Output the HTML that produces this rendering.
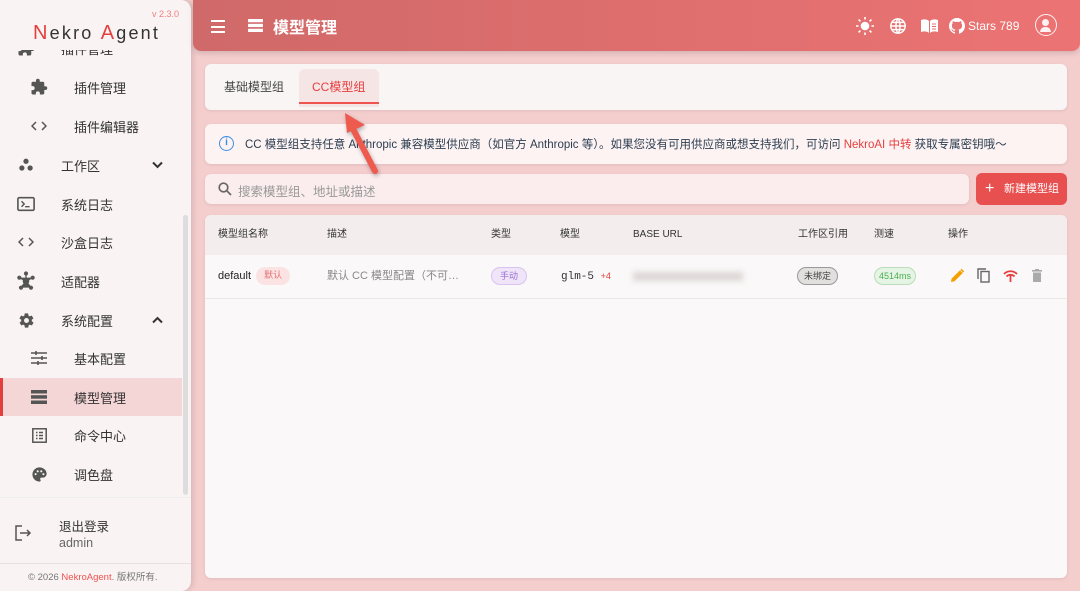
<!DOCTYPE html>
<html><head><meta charset="utf-8"><style>
*{box-sizing:border-box;margin:0;padding:0}
body{width:1080px;height:591px;overflow:hidden;background:#f4cdcd;font-family:"Liberation Sans","Noto Sans CJK SC",sans-serif;position:relative;color:#333}
.side{position:absolute;left:0;top:0;width:191px;height:591px;background:#f9f3f3;border-radius:0 10px 10px 0;box-shadow:2px 0 6px rgba(0,0,0,.12);overflow:hidden}
.logohd{position:absolute;left:0;top:0;width:182px;height:50px;background:#f9f3f3}
.logo{position:absolute;left:33px;top:22px;font-size:18px;letter-spacing:2.2px;color:#333}
.logo b{color:#e53e3e;font-weight:normal;font-size:20px}
.ver{position:absolute;left:152px;top:9px;font-size:9px;color:#f07f7f}
.it{position:absolute;left:0;width:182px;height:38px;font-size:13px;color:#333;display:flex;align-items:center}
.it .ic{position:absolute;left:16px;width:20px;height:20px;display:flex;align-items:center;justify-content:center;color:#555}
.it.sub .ic{left:29px}
.it .tx{position:absolute;left:61px}
.it.sub .tx{left:74px}
.it .ch{position:absolute;left:152px;top:15px}
.act{background:#f5d6d7;border-left:3px solid #e53e3e}
.sb{position:absolute;left:183px;top:215px;width:5px;height:280px;background:#ddd;border-radius:3px}
.hdr{position:absolute;left:193px;top:0;width:887px;height:51px;background:linear-gradient(90deg,#d06969,#ec7373);border-radius:0 0 8px 8px;box-shadow:0 2px 6px rgba(0,0,0,.15);color:#fff}
.card{position:absolute;left:205px;width:862px;background:#f9f5f5;border-radius:6px;box-shadow:0 1px 3px rgba(0,0,0,.08)}
.tb{position:absolute;top:0;height:44px;display:flex;align-items:center;font-size:12px}
.th{position:absolute;top:0;height:40px;line-height:40px;font-size:10px;color:#333}
.td{position:absolute;top:40px;height:43px;line-height:43px;font-size:11px}
.chip{display:inline-block;border-radius:9px;font-size:9px;padding:0 8px;height:18px;line-height:16px;vertical-align:middle}
</style></head><body>
<div class="side">
<div class="it" style="top:29px"><span class="ic"><svg width="18" height="18" viewBox="0 0 24 24"><path fill="#555" d="M20.5 11H19V7a2 2 0 0 0-2-2h-4V3.5a2.5 2.5 0 0 0-5 0V5H4a2 2 0 0 0-2 2v3.8h1.5a2.7 2.7 0 0 1 0 5.4H2V20a2 2 0 0 0 2 2h3.8v-1.5a2.7 2.7 0 0 1 5.4 0V22H17a2 2 0 0 0 2-2v-4h1.5a2.5 2.5 0 0 0 0-5z"/></svg></span><span class="tx">插件管理</span></div>
<div class="logohd"></div>
<div class="logo"><b>N</b>ekro <b>A</b>gent</div>
<div class="ver">v 2.3.0</div>
<div class="it sub" style="top:68px"><span class="ic"><svg width="18" height="18" viewBox="0 0 24 24"><path fill="#555" d="M20.5 11H19V7a2 2 0 0 0-2-2h-4V3.5a2.5 2.5 0 0 0-5 0V5H4a2 2 0 0 0-2 2v3.8h1.5a2.7 2.7 0 0 1 0 5.4H2V20a2 2 0 0 0 2 2h3.8v-1.5a2.7 2.7 0 0 1 5.4 0V22H17a2 2 0 0 0 2-2v-4h1.5a2.5 2.5 0 0 0 0-5z"/></svg></span><span class="tx">插件管理</span></div>
<div class="it sub" style="top:107px"><span class="ic"><svg width="16" height="10" viewBox="0 0 16 10" fill="none" stroke="#555" stroke-width="1.5"><path d="M5 1L1 5l4 4M11 1l4 4-4 4"/></svg></span><span class="tx">插件编辑器</span></div>
<div class="it" style="top:146px"><span class="ic"><svg width="18" height="18" viewBox="0 0 24 24" fill="#555"><circle cx="12" cy="7" r="3.5"/><circle cx="6.5" cy="16" r="3.5"/><circle cx="17.5" cy="16" r="3.5"/></svg></span><span class="tx">工作区</span><svg class="ch" width="11" height="8" viewBox="0 0 11 8" fill="none" stroke="#333" stroke-width="2"><path d="M1 1.5l4.5 4.5 4.5-4.5"/></svg></div>
<div class="it" style="top:185px"><span class="ic"><svg width="18" height="16" viewBox="0 0 20 16"><rect x="1" y="1" width="18" height="14" rx="1.5" fill="none" stroke="#555" stroke-width="1.8"/><path d="M5 5l3 3-3 3M9 11h5" stroke="#555" stroke-width="1.6" fill="none"/></svg></span><span class="tx">系统日志</span></div>
<div class="it" style="top:223px"><span class="ic"><svg width="16" height="10" viewBox="0 0 16 10" fill="none" stroke="#555" stroke-width="1.5"><path d="M5 1L1 5l4 4M11 1l4 4-4 4"/></svg></span><span class="tx">沙盒日志</span></div>
<div class="it" style="top:262px"><span class="ic"><svg width="20" height="20" viewBox="0 0 24 24" fill="#555"><circle cx="12" cy="12" r="4"/><circle cx="12" cy="3" r="2.5"/><circle cx="4" cy="8" r="2.5"/><circle cx="20" cy="8" r="2.5"/><circle cx="6" cy="20" r="2.5"/><circle cx="18" cy="20" r="2.5"/><path d="M12 3v9M4 8l8 4 8-4M6 20l6-8 6 8" stroke="#555" stroke-width="1.5"/></svg></span><span class="tx">适配器</span></div>
<div class="it" style="top:301px"><span class="ic"><svg width="17" height="17" viewBox="0 0 24 24"><path fill="#555" d="M19.4 13c0-.3.1-.7.1-1s0-.7-.1-1l2.1-1.6c.2-.2.2-.4.1-.6l-2-3.5c-.1-.2-.4-.3-.6-.2l-2.5 1c-.5-.4-1.100-.7-1.700-1l-.4-2.600c0-.3-.2-.5-.5-.5h-4c-.2 0-.5.2-.5.4l-.4 2.700c-.6.2-1.100.6-1.700 1l-2.500-1c-.2-.1-.5 0-.6.2l-2 3.500c-.1.2-.1.5.1.6L4.6 11c0 .3-.1.7-.1 1s0 .7.1 1l-2.100 1.600c-.2.2-.2.4-.1.6l2 3.500c.1.2.4.3.6.2l2.500-1c.5.4 1.100.7 1.700 1l.4 2.600c0 .3.2.5.5.5h4c.2 0 .5-.2.5-.4l.4-2.700c.6-.3 1.200-.6 1.700-1l2.500 1c.2.1.5 0 .6-.2l2-3.500c.1-.2.1-.5-.1-.6zM12 15.5a3.5 3.5 0 1 1 0-7 3.5 3.5 0 0 1 0 7z"/></svg></span><span class="tx">系统配置</span><svg class="ch" width="11" height="8" viewBox="0 0 11 8" fill="none" stroke="#333" stroke-width="2"><path d="M1 6.5l4.5-4.5 4.5 4.5"/></svg></div>
<div class="it sub" style="top:339px"><span class="ic"><svg width="16" height="14" viewBox="0 0 16 14" stroke="#555" stroke-width="1.6"><path d="M0 2h16M0 7h16M0 12h16"/><path d="M5 0v4M11 5v4M7 10v4"/></svg></span><span class="tx">基本配置</span></div>
<div class="it sub act" style="top:378px"><span class="ic" style="left:26px"><svg width="16" height="14" viewBox="0 0 16 14" fill="#555"><rect y="0" width="16" height="3.5"/><rect y="5.2" width="16" height="3.5"/><rect y="10.5" width="16" height="3.5"/></svg></span><span class="tx" style="left:71px">模型管理</span></div>
<div class="it sub" style="top:416px"><span class="ic"><svg width="15" height="15" viewBox="0 0 15 15"><rect x=".8" y=".8" width="13.4" height="13.4" fill="none" stroke="#555" stroke-width="1.5"/><path d="M4 4.5h1.5M7 4.5h4M4 7.5h1.5M7 7.5h4M4 10.5h1.5M7 10.5h4" stroke="#555" stroke-width="1.4"/></svg></span><span class="tx">命令中心</span></div>
<div class="it sub" style="top:455px"><span class="ic"><svg width="17" height="17" viewBox="0 0 24 24"><path fill="#555" d="M12 2C6.5 2 2 6.5 2 12s4.5 10 10 10c.9 0 1.7-.7 1.7-1.7 0-.4-.2-.8-.4-1.1-.3-.3-.4-.7-.4-1.1 0-.9.7-1.7 1.7-1.7h2c3 0 5.5-2.5 5.5-5.5C22 6 17.5 2 12 2zM6.5 13a1.5 1.5 0 1 1 0-3 1.5 1.5 0 0 1 0 3zm3-4a1.5 1.5 0 1 1 0-3 1.5 1.5 0 0 1 0 3zm5 0a1.5 1.5 0 1 1 0-3 1.5 1.5 0 0 1 0 3zm3 4a1.5 1.5 0 1 1 0-3 1.5 1.5 0 0 1 0 3z"/></svg></span><span class="tx">调色盘</span></div>
<div style="position:absolute;left:0;top:497px;width:191px;height:1px;background:#eee"></div>
<svg style="position:absolute;left:15px;top:525px" width="17" height="16" viewBox="0 0 17 16" fill="none" stroke="#555" stroke-width="1.5"><path d="M7 1H1v14h6M5 8h10M12 5l3 3-3 3"/></svg>
<div style="position:absolute;left:59px;top:516px;font-size:12.5px">退出登录</div>
<div style="position:absolute;left:59px;top:536px;font-size:12.5px;color:#666">admin</div>
<div style="position:absolute;left:0;top:563px;width:191px;height:1px;background:#e8e0e0"></div>
<div style="position:absolute;left:28px;top:569px;font-size:9.5px;color:#777">© 2026 <span style="color:#ef5350">NekroAgent</span>. 版权所有.</div>
<div class="sb"></div>
</div>

<div class="hdr">
<div style="position:absolute;left:18px;top:20px;width:14px"><div style="height:2px;background:#fff;margin-bottom:3.5px"></div><div style="height:2px;background:#fff;margin-bottom:3.5px"></div><div style="height:2px;background:#fff"></div></div>
<svg style="position:absolute;left:55px;top:19px" width="15" height="13" viewBox="0 0 16 14" fill="#fff"><rect width="16" height="3.5"/><rect y="5.2" width="16" height="3.5"/><rect y="10.5" width="16" height="3.5"/></svg>
<div style="position:absolute;left:80px;top:14px;font-size:16px;font-weight:bold">模型管理</div>
<svg style="position:absolute;left:663px;top:17px" width="18" height="18" viewBox="0 0 18 18" stroke="#fff" stroke-width="1.6"><circle cx="9" cy="9" r="3.5" fill="#fff"/><path d="M9 0v2.5M9 15.5V18M0 9h2.5M15.5 9H18M2.6 2.6l1.8 1.8M13.6 13.6l1.8 1.8M2.6 15.4l1.8-1.8M13.6 4.4l1.8-1.8"/></svg>
<svg style="position:absolute;left:696px;top:17px" width="18" height="18" viewBox="0 0 20 20" fill="none" stroke="#fff" stroke-width="1.6"><circle cx="10" cy="10" r="8"/><path d="M2 10h16M10 2c3 3 3 13 0 16M10 2c-3 3-3 13 0 16M3.5 6h13M3.5 14h13"/></svg>
<svg style="position:absolute;left:727px;top:18px" width="19" height="16" viewBox="0 0 19 16"><path d="M1 2c3-1 6-1 8 1v12c-2-2-5-2-8-1z M18 2c-3-1-6-1-8 1v12c2-2 5-2 8-1z" fill="#fff"/><path d="M12 6h4M12 8.5h4M12 11h4" stroke="#e07070" stroke-width=".9"/></svg>
<svg style="position:absolute;left:756px;top:18px" width="16" height="16" viewBox="0 0 16 16" fill="#fff"><path d="M8 0C3.6 0 0 3.6 0 8c0 3.5 2.3 6.5 5.5 7.6.4.1.5-.2.5-.4v-1.4c-2.2.5-2.7-1-2.7-1-.4-.9-.9-1.2-.9-1.2-.7-.5.1-.5.1-.5.8.1 1.2.8 1.2.8.7 1.2 1.9.9 2.3.7.1-.5.3-.9.5-1.1-1.8-.2-3.6-.9-3.6-4 0-.9.3-1.6.8-2.1-.1-.2-.4-1 .1-2.1 0 0 .7-.2 2.2.8.6-.2 1.3-.3 2-.3s1.4.1 2 .3c1.5-1 2.2-.8 2.2-.8.4 1.1.2 1.9.1 2.1.5.6.8 1.3.8 2.1 0 3.1-1.9 3.8-3.7 4 .3.3.6.8.6 1.5v2.2c0 .2.1.5.6.4C13.7 14.5 16 11.5 16 8c0-4.4-3.6-8-8-8z"/></svg>
<div style="position:absolute;left:775px;top:19px;font-size:12px">Stars 789</div>
<div style="position:absolute;left:842px;top:14px;width:22px;height:22px;border:1.5px solid #fff;border-radius:50%;opacity:.9"><div style="position:absolute;left:6px;top:4px;width:7px;height:7px;border-radius:50%;background:#fff"></div><div style="position:absolute;left:4px;top:12px;width:11px;height:5px;border-radius:5px 5px 0 0;background:#fff"></div></div>
</div>

<div class="card" style="top:64px;height:46px">
<div class="tb" style="left:19px;color:#444">基础模型组</div>
<div style="position:absolute;left:94px;top:5px;width:80px;height:38px;background:#f6e5e5;border-radius:6px 6px 0 0"></div>
<div class="tb" style="left:107px;color:#e53e3e">CC模型组</div>
<div style="position:absolute;left:94px;top:38px;width:80px;height:2px;background:#ef5350"></div>
</div>

<div class="card" style="top:124px;height:40px;background:#fdf3f3">
<div style="position:absolute;left:14px;top:12px;width:15px;height:15px;border:1.4px solid #3b8ee8;border-radius:50%;color:#3b8ee8;font-size:10px;text-align:center;line-height:12px;font-weight:bold">i</div>
<div style="position:absolute;left:40px;top:12px;font-size:11.5px;color:#2c3e50;white-space:nowrap">CC 模型组支持任意 Anthropic 兼容模型供应商（如官方 Anthropic 等）。如果您没有可用供应商或想支持我们，可访问 <span style="color:#e53e3e">NekroAI 中转</span> 获取专属密钥哦～</div>
</div>

<div class="card" style="top:174px;width:764px;height:30px;background:#fbeded">
<svg style="position:absolute;left:13px;top:8px" width="14" height="14" viewBox="0 0 14 14" fill="none" stroke="#666" stroke-width="1.7"><circle cx="5.5" cy="5.5" r="4.3"/><path d="M8.7 8.7L13 13"/></svg>
<div style="position:absolute;left:33px;top:7px;font-size:12.5px;color:#999">搜索模型组、地址或描述</div>
</div>
<div style="position:absolute;left:976px;top:173px;width:91px;height:32px;background:#e84f4f;border-radius:6px;color:#fff;font-size:11px;line-height:32px"><span style="position:absolute;left:9px;font-size:16px">+</span><span style="position:absolute;left:28px">新建模型组</span></div>

<div class="card" style="top:215px;height:363px;background:#faf8f8">
<div style="position:absolute;left:0;top:0;width:862px;height:40px;background:#f3eded;border-radius:6px 6px 0 0"></div>
<div style="position:absolute;left:0;top:83px;width:862px;height:1px;background:#ece6e6"></div>
<div class="th" style="left:13px">模型组名称</div><div class="th" style="left:122px">描述</div><div class="th" style="left:286px">类型</div><div class="th" style="left:355px">模型</div><div class="th" style="left:428px">BASE URL</div><div class="th" style="left:593px">工作区引用</div><div class="th" style="left:669px">测速</div><div class="th" style="left:743px">操作</div>
<div class="td" style="left:13px;color:#222">default <span class="chip" style="background:#fbe3e3;color:#e57373;margin-left:2px">默认</span></div>
<div class="td" style="left:122px;color:#888">默认 CC 模型配置（不可…</div>
<div class="td" style="left:286px"><span class="chip" style="background:#efe4f8;border:1px solid #d9c4ef;color:#9c6fd0">手动</span></div>
<div class="td" style="left:356px;font-family:'Liberation Mono',monospace;font-size:11px">glm-5 <span style="color:#e53e3e;font-size:9px;font-family:'Liberation Sans'">+4</span></div>
<div style="position:absolute;left:428px;top:57px;width:110px;height:9px;background:#ddd6d6;filter:blur(3px)"></div>
<div class="td" style="left:592px"><span class="chip" style="background:#e2dfdf;border:1px solid #999;color:#444;padding:0 6px">未绑定</span></div>
<div class="td" style="left:669px"><span class="chip" style="background:#e6f4e6;border:1px solid #b9ddb9;color:#4caf50;padding:0 4px">4514ms</span></div>
<svg style="position:absolute;left:746px;top:54px" width="13" height="13" viewBox="0 0 13 13"><path d="M0 13l.6-3.4L9 1.2l2.8 2.8-8.4 8.4z" fill="#f5a000"/><path d="M10 .2l2.8 2.8" stroke="#f5a000" stroke-width="1.5"/></svg>
<svg style="position:absolute;left:772px;top:53px" width="13" height="15" viewBox="0 0 13 15" fill="none" stroke="#666" stroke-width="1.4"><rect x="4" y="3.5" width="8" height="10.5"/><path d="M1 11V1h8"/></svg>
<svg style="position:absolute;left:798px;top:55px" width="15" height="12" viewBox="0 0 15 12" fill="none" stroke="#e53e3e" stroke-width="1.8"><path d="M1 4a9 9 0 0 1 13 0M3.5 6.5a5.5 5.5 0 0 1 8 0"/><path d="M7.5 5v7"/></svg>
<svg style="position:absolute;left:827px;top:54px" width="10" height="13" viewBox="0 0 10 13" fill="#aaa"><rect x="0" y="1" width="10" height="1.6"/><rect x="3" y="0" width="4" height="1.5"/><rect x="1" y="3.5" width="8" height="9.5"/></svg>
</div>

<svg style="position:absolute;left:335px;top:105px" width="55" height="75" viewBox="0 0 55 75"><g style="filter:drop-shadow(1px 2px 2px rgba(0,0,0,.3))"><path d="M40 66L17 22" stroke="#ef5a4f" stroke-width="6" stroke-linecap="round"/><path d="M10 8L30 20 12 28z" fill="#ef5a4f"/></g></svg>
</body></html>
